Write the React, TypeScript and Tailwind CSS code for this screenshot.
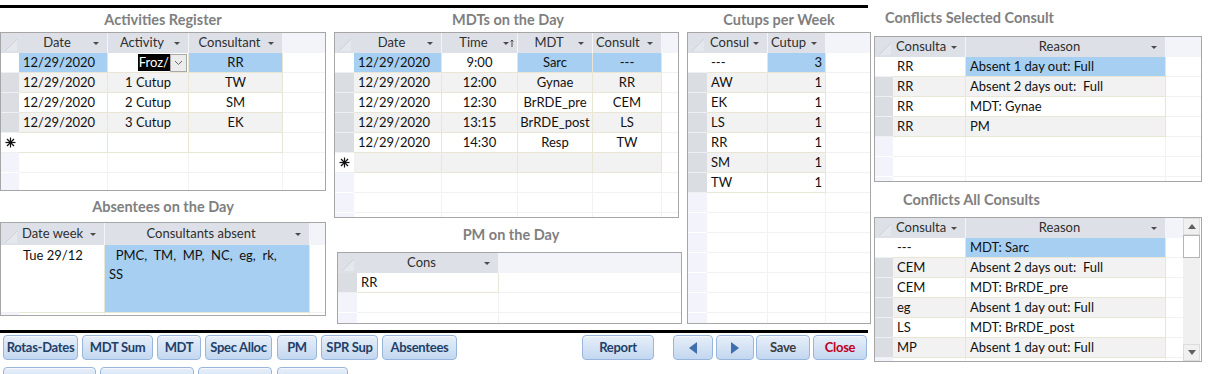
import React from 'react';

type Col = { t: string; a?: 'l' | 'c' | 'r'; ha?: 'l' | 'c' };
type Cell = string | { v: React.ReactNode; hl?: 'b' | 'w' | 'e' };
type Row = Cell[];

const alignCls = { l: 'justify-start pl-[4px]', c: 'justify-center', r: 'justify-end pr-[3px]' };

const HeadArrow = ({ sort }: { sort?: boolean }) => (
  <svg width="12" height="10" viewBox="0 0 12 10" className="shrink-0">
    <polygon points="1,4 7,4 4,7" fill="#4a4a4a" />
    {sort && <path d="M10 2 V9 M8.5 3.5 L10 2 L11.5 3.5" stroke="#4a4a4a" strokeWidth="1" fill="none" />}
  </svg>
);

const Corner = () => (
  <svg width="18" height="18" viewBox="0 0 18 18">
    <polygon points="4,16 16,4 16,16" fill="#e4e7ec" />
    <line x1="4" y1="16" x2="16" y2="4" stroke="#cfd3d9" strokeWidth="1" />
  </svg>
);

const Star = () => (
  <svg width="11" height="11" viewBox="0 0 11 11">
    <g stroke="#111" strokeWidth="1.2">
      <line x1="5.5" y1="0.5" x2="5.5" y2="10.5" />
      <line x1="0.5" y1="5.5" x2="10.5" y2="5.5" />
      <line x1="2" y1="2" x2="9" y2="9" />
      <line x1="9" y1="2" x2="2" y2="9" />
    </g>
  </svg>
);

function Grid({
  box,
  tpl,
  cols,
  rows,
  fill,
  newRow,
  curSel = true,
  headH = 'h-[20px]',
  rowH = 'h-[20px]',
  rowTop,
  sortCol,
}: {
  box: string;
  tpl: string;
  cols: Col[];
  rows: Row[];
  fill: number;
  newRow?: boolean;
  curSel?: boolean;
  headH?: string;
  rowH?: string;
  rowTop?: boolean;
  sortCol?: number;
}) {
  return (
    <div className={`${box} shrink-0 overflow-hidden`}>
      {/* header */}
      <div className={`grid ${tpl} ${headH}`}>
        <div className="bg-[#dde1e7] flex items-end">
          <Corner />
        </div>
        {cols.map((c, i) => (
          <div key={i} className="bg-[#dde1e7] border-r border-[#f4f5f7] flex items-center pl-[3px] pr-[3px] text-[#2e2e2e] overflow-hidden">
            <span className={`flex-1 truncate ${c.ha === 'l' ? 'text-left' : 'text-center'}`}>{c.t}</span>
            <HeadArrow sort={sortCol === i} />
          </div>
        ))}
        <div className="bg-[#f3f4fa]" />
      </div>
      {/* rows */}
      {rows.map((r, ri) => {
        const alt = ri % 2 === 1 ? 'bg-[#f2f2f2]' : 'bg-white';
        return (
          <div key={ri} className={`grid ${tpl} ${rowH}`}>
            <div className={`${ri === 0 && curSel ? 'bg-white' : 'bg-[#dadde2]'} border-b border-[#eef0f3]`} />
            {r.map((cell, ci) => {
              const v = typeof cell === 'string' ? cell : cell.v;
              const hl = typeof cell === 'string' ? undefined : cell.hl;
              const bg = hl === 'b' ? 'bg-[#a6cff1]' : hl === 'w' || hl === 'e' ? 'bg-white' : alt;
              const a = cols[ci].a ?? 'l';
              return (
                <div
                  key={ci}
                  className={`${bg} border-r border-b border-[#e9e6d6] flex ${rowTop ? 'items-start pt-[1px]' : 'items-center'} ${alignCls[a]} overflow-hidden whitespace-pre-wrap leading-[19px]`}
                >
                  {v}
                </div>
              );
            })}
            <div className="bg-white border-b border-[#f1f1f1]" />
          </div>
        );
      })}
      {newRow && (
        <div className={`grid ${tpl} h-[20px]`}>
          <div className="bg-white border-b border-[#eef0f3] flex items-center justify-center">
            <Star />
          </div>
          {cols.map((_, ci) => (
            <div key={ci} className={`${rows.length % 2 === 1 ? 'bg-[#f2f2f2]' : 'bg-white'} border-r border-b border-[#e9e6d6]`} />
          ))}
          <div className="bg-white border-b border-[#f1f1f1]" />
        </div>
      )}
      {Array.from({ length: fill }).map((_, fi) => (
        <div key={fi} className={`grid ${tpl} h-[20px]`}>
          <div className="bg-[#f3f4fb] border-b border-white" />
          {cols.map((_, ci) => (
            <div key={ci} className="bg-white border-r border-b border-[#f2f2f2]" />
          ))}
          <div className="bg-white border-b border-[#f2f2f2]" />
        </div>
      ))}
    </div>
  );
}

const Title = ({ children, cls }: { children: React.ReactNode; cls: string }) => (
  <div className={`${cls} shrink-0 font-bold text-[14.5px] text-[#7f7f7f] flex items-center`}>{children}</div>
);

const Btn = ({ children, cls, txt = 'text-[#233f68]' }: { children?: React.ReactNode; cls: string; txt?: string }) => (
  <div
    className={`${cls} ${txt} h-[25px] shrink-0 rounded-[4px] border border-[#98b6dc] bg-linear-to-b from-[#e7eff9] to-[#c3d7f0] shadow-[inset_0_1px_0_#f4f8fd] flex items-center justify-center font-bold text-[13px] tracking-[-0.3px] whitespace-nowrap`}
  >
    {children}
  </div>
);

const FrozCell = () => (
  <div className="flex w-full h-full items-center justify-end">
    <span className="bg-black text-white px-[1px] leading-[17px]">Froz/</span>
    <span className="w-[17px] h-[18px] border border-[#a8a8a8] bg-[#ececec] flex items-center justify-center mr-[1px]">
      <svg width="9" height="6" viewBox="0 0 9 6">
        <path d="M1 1 L4.5 4.5 L8 1" stroke="#666" strokeWidth="1" fill="none" />
      </svg>
    </span>
  </div>
);

export default function App() {
  const d = '12/29/2020';
  return (
    <div className="w-[1215px] h-[374px] bg-white overflow-hidden flex font-[Lato,sans-serif] text-[13px] text-[#111]">
      {/* left section */}
      <div className="w-[871px] shrink-0 flex flex-col">
        <div className="mt-[5px] h-[3px] w-[868px] shrink-0 bg-black" />
        <div className="flex h-[322px] shrink-0">
          {/* column 1 */}
          <div className="w-[326px] flex flex-col">
            <Title cls="h-[24px] justify-center">Activities Register</Title>
            <Grid
              box="w-[326px] h-[159px] border border-[#a6a6a6]"
              tpl="grid-cols-[18px_89px_81px_94px_1fr]"
              cols={[{ t: 'Date' }, { t: 'Activity', a: 'c' }, { t: 'Consultant', a: 'c' }]}
              rows={[
                [{ v: d, hl: 'b' }, { v: <FrozCell />, hl: 'e' }, { v: 'RR', hl: 'b' }],
                [d, '1 Cutup', 'TW'],
                [d, '2 Cutup', 'SM'],
                [d, '3 Cutup', 'EK'],
              ]}
              newRow
              fill={2}
            />
            <Title cls="h-[31px] justify-center">Absentees on the Day</Title>
            <Grid
              box="w-[326px] h-[94px] border border-[#a6a6a6]"
              tpl="grid-cols-[18px_86px_205px_1fr]"
              headH="h-[22px]"
              rowH="h-[68px]"
              rowTop
              cols={[{ t: 'Date week', ha: 'l' }, { t: 'Consultants absent' }]}
              rows={[['Tue 29/12', { v: '  PMC,  TM,  MP,  NC,  eg,  rk,\nSS', hl: 'b' }]]}
              fill={1}
            />
          </div>
          {/* column 2 */}
          <div className="w-[348px] ml-[8px] flex flex-col">
            <Title cls="h-[24px] justify-center">MDTs on the Day</Title>
            <Grid
              box="w-[345px] h-[186px] border border-[#a6a6a6]"
              tpl="grid-cols-[19px_88px_76px_75px_69px_1fr]"
              sortCol={1}
              cols={[{ t: 'Date' }, { t: 'Time', a: 'c' }, { t: 'MDT', a: 'c' }, { t: 'Consult', a: 'c', ha: 'l' }]}
              rows={[
                [{ v: d, hl: 'b' }, { v: '9:00', hl: 'w' }, { v: 'Sarc', hl: 'b' }, { v: '---', hl: 'b' }],
                [d, '12:00', 'Gynae', 'RR'],
                [d, '12:30', 'BrRDE_pre', 'CEM'],
                [d, '13:15', 'BrRDE_post', 'LS'],
                [d, '14:30', 'Resp', 'TW'],
              ]}
              newRow
              fill={3}
            />
            <Title cls="h-[34px] justify-center pl-[6px]">PM on the Day</Title>
            <Grid
              box="w-[345px] h-[72px] ml-[3px] border border-[#a6a6a6]"
              tpl="grid-cols-[19px_142px_1fr]"
              curSel={false}
              cols={[{ t: 'Cons' }]}
              rows={[['RR']]}
              fill={2}
            />
          </div>
          {/* column 3 */}
          <div className="w-[184px] ml-[5px] flex flex-col">
            <Title cls="h-[24px] justify-center">Cutups per Week</Title>
            <Grid
              box="w-[184px] h-[292px] border border-[#a6a6a6]"
              tpl="grid-cols-[19px_61px_58px_1fr]"
              cols={[{ t: 'Consul', ha: 'l' }, { t: 'Cutup', a: 'r', ha: 'l' }]}
              rows={[
                [{ v: '---', hl: 'w' }, { v: '3', hl: 'b' }],
                ['AW', '1'],
                ['EK', '1'],
                ['LS', '1'],
                ['RR', '1'],
                ['SM', '1'],
                ['TW', '1'],
              ]}
              fill={7}
            />
          </div>
        </div>
        <div className="h-[3px] w-[868px] shrink-0 bg-black" />
        {/* buttons */}
        <div className="flex mt-[2px] ml-[3px] shrink-0">
          <Btn cls="w-[75px]">Rotas-Dates</Btn>
          <Btn cls="w-[71px] ml-[4px]">MDT Sum</Btn>
          <Btn cls="w-[44px] ml-[4px]">MDT</Btn>
          <Btn cls="w-[67px] ml-[4px]">Spec Alloc</Btn>
          <Btn cls="w-[40px] ml-[5px]">PM</Btn>
          <Btn cls="w-[57px] ml-[4px]">SPR Sup</Btn>
          <Btn cls="w-[75px] ml-[4px]">Absentees</Btn>
          <Btn cls="w-[72px] ml-[125px]">Report</Btn>
          <Btn cls="w-[40px] ml-[19px]">
            <svg width="10" height="14" viewBox="0 0 10 14">
              <polygon points="9,1 9,13 1,7" fill="#3f6fae" />
            </svg>
          </Btn>
          <Btn cls="w-[38px] ml-[3px]">
            <svg width="10" height="14" viewBox="0 0 10 14">
              <polygon points="1,1 1,13 9,7" fill="#3f6fae" />
            </svg>
          </Btn>
          <Btn cls="w-[54px] ml-[2px]" txt="text-[#3b3b3b]">Save</Btn>
          <Btn cls="w-[54px] ml-[3px]" txt="text-[#c0001a]">Close</Btn>
        </div>
        <div className="flex mt-[7px] ml-[3px] shrink-0">
          <Btn cls="w-[93px]" />
          <Btn cls="w-[94px] ml-[4px]" />
          <Btn cls="w-[74px] ml-[4px]" />
          <Btn cls="w-[71px] ml-[5px]" />
        </div>
      </div>
      {/* right section */}
      <div className="w-[328px] ml-[3px] shrink-0 flex flex-col">
        <Title cls="h-[36px] pl-[11px]">Conflicts Selected Consult</Title>
        <Grid
          box="w-[328px] h-[146px] border border-[#a6a6a6]"
          tpl="grid-cols-[18px_73px_200px_1fr]"
          cols={[{ t: 'Consulta', ha: 'l' }, { t: 'Reason' }]}
          rows={[
            [{ v: 'RR', hl: 'w' }, { v: 'Absent 1 day out: Full', hl: 'b' }],
            ['RR', 'Absent 2 days out:  Full'],
            ['RR', 'MDT: Gynae'],
            ['RR', 'PM'],
          ]}
          fill={3}
        />
        <Title cls="h-[35px] pl-[29px]">Conflicts All Consults</Title>
        <div className="w-[328px] h-[145px] shrink-0 border border-[#a6a6a6] flex">
          <Grid
            box="flex-1 h-full"
            tpl="grid-cols-[18px_73px_200px_1fr]"
            cols={[{ t: 'Consulta', ha: 'l' }, { t: 'Reason' }]}
            rows={[
              [{ v: '---', hl: 'w' }, { v: 'MDT: Sarc', hl: 'b' }],
              ['CEM', 'Absent 2 days out:  Full'],
              ['CEM', 'MDT: BrRDE_pre'],
              ['eg', 'Absent 1 day out: Full'],
              ['LS', 'MDT: BrRDE_post'],
              ['MP', 'Absent 1 day out: Full'],
            ]}
            fill={1}
          />
          <div className="w-[17px] mr-[1px] flex flex-col bg-[#f0f0f0]">
            <div className="h-[17px] bg-[#f0f0f0] border border-[#dcdcdc] flex items-center justify-center">
              <svg width="8" height="5" viewBox="0 0 8 5">
                <polygon points="0,5 8,5 4,0" fill="#606060" />
              </svg>
            </div>
            <div className="h-[23px] bg-white border border-[#b5b5b5]" />
            <div className="flex-1" />
            <div className="h-[17px] bg-[#f0f0f0] border border-[#dcdcdc] flex items-center justify-center">
              <svg width="8" height="5" viewBox="0 0 8 5">
                <polygon points="0,0 8,0 4,5" fill="#606060" />
              </svg>
            </div>
          </div>
        </div>
      </div>
    </div>
  );
}
